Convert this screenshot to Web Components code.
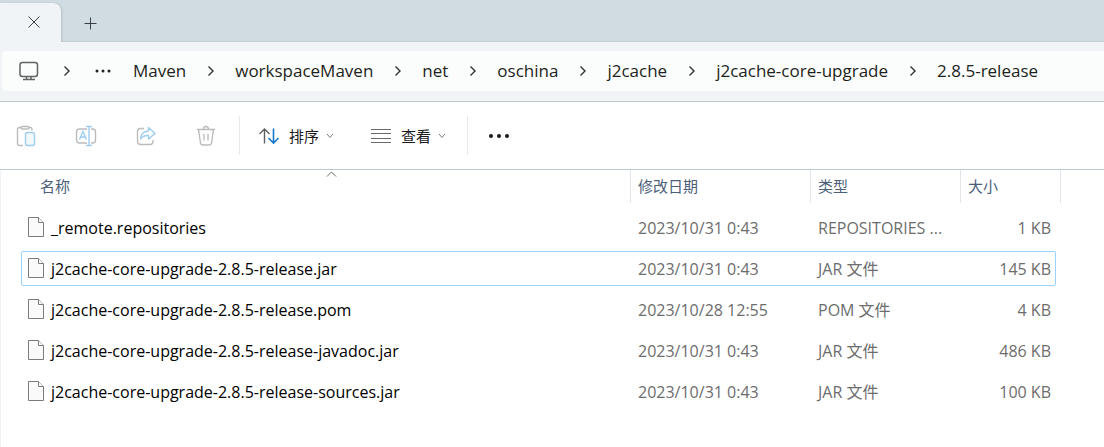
<!DOCTYPE html>
<html lang="zh-CN">
<head>
<meta charset="utf-8">
<title>2.8.5-release</title>
<style>
  body { margin: 0; background: #fff; font-family: "Open Sans", "Noto Sans CJK SC", sans-serif; }
</style>
</head>
<body>
<file-explorer></file-explorer>

<template id="file-explorer">
  <style>
    :host { display: flex; flex-direction: column; min-height: 100vh; background: #fff; color: #1b1b1b; }
    file-list { flex: 1; }
  </style>
  <tab-strip></tab-strip>
  <address-bar>
    <path-crumb>Maven</path-crumb>
    <path-crumb>workspaceMaven</path-crumb>
    <path-crumb>net</path-crumb>
    <path-crumb>oschina</path-crumb>
    <path-crumb>j2cache</path-crumb>
    <path-crumb>j2cache-core-upgrade</path-crumb>
    <path-crumb last>2.8.5-release</path-crumb>
  </address-bar>
  <command-bar></command-bar>
  <file-list></file-list>
</template>

<template id="tab-strip">
  <style>
    :host { display: flex; height: 42px; box-sizing: border-box; background: #d0dce1; border-bottom: 1px solid #c3cfd3; }
    .tab { box-sizing: border-box; width: 61px; margin: 3px 0 -1px; padding: 6px 14px 0 0; display: flex; justify-content: flex-end; align-items: flex-start; background: #f0f4f6; border-radius: 0 8px 0 0; box-shadow: 1px 0 2px #b4c2c7; clip-path: inset(-3px -4px 0 0); }
    button { border: 0; background: none; padding: 0; width: 26px; height: 26px; display: grid; place-items: center; }
    .new { margin: 10px 0 0 16px; }
    svg { fill: none; stroke: #3b3f41; }
  </style>
  <div class="tab"><button aria-label="关闭标签页"><svg width="12" height="12"><path d="M.5.5l11 11M11.5.5l-11 11"/></svg></button></div>
  <button class="new" aria-label="新建标签页"><svg width="13" height="13"><path d="M6.5.5v12M.5 6.5h12"/></svg></button>
</template>

<template id="address-bar">
  <style>
    :host { display: block; background: #f0f4f6; padding: 9px 0 10px 2px; border-bottom: 1px solid #c0cacd; }
    nav { display: flex; align-items: center; height: 40px; padding-left: 16px; background: #fbfdfd; border-radius: 4px 0 0 4px; }
    button { border: 0; background: none; padding: 0; display: flex; }
    svg { fill: none; stroke: #303030; }
    .pc { padding: 0 24px 0 0; }
    .chev { stroke-width: 1.4; }
    .more { padding: 0 22px 0 24px; }
    .more svg { fill: #222; stroke: none; }
  </style>
  <nav aria-label="路径">
    <button class="pc" aria-label="此电脑"><svg width="21" height="20" stroke-width="1.5" style="stroke:#606364"><rect x="2" y="1.5" width="17.5" height="14" rx="2.5"/><path d="M8.500 15.5v3M13 15.5v3M5 18.5h12"/></svg></button>
    <svg class="chev" width="8" height="12"><path d="M1.5 1.5L6 6l-4.5 4.5"/></svg>
    <button class="more" aria-label="更多"><svg width="16" height="6"><circle cx="2" cy="3" r="1.5"/><circle cx="8" cy="3" r="1.5"/><circle cx="14" cy="3" r="1.5"/></svg></button>
    <slot></slot>
  </nav>
</template>

<template id="path-crumb">
  <style>
    :host { display: flex; align-items: center; white-space: nowrap; }
    a { color: #1d1f20; text-decoration: none; font-size: 17px; line-height: 24px; }
    svg { margin: 0 20px 0 21px; fill: none; stroke: #303030; stroke-width: 1.4; }
    :host([last]) svg { display: none; }
  </style>
  <a href="#"><slot></slot></a>
  <svg width="8" height="12"><path d="M1.5 1.5L6 6l-4.5 4.5"/></svg>
</template>

<template id="command-bar">
  <style>
    :host { display: flex; align-items: center; height: 67px; background: #fff; border-bottom: 1px solid #bfc8cc; }
    .edit { display: flex; gap: 36px; padding: 0 21px 0 14px; }
    .views { display: flex; gap: 36px; padding: 0 21px 0 18px; }
    .edit, .views { height: 39px; align-items: center; border-right: 1px solid #e6e9ea; }
    button { border: 0; background: none; padding: 0; display: flex; align-items: center; }
    .dots { margin-left: 20px; }
    .dots svg { fill: #1b1b1b; }
    svg { display: block; fill: none; }
    .g { stroke: #bcbcbc; }
    .b { stroke: #9fcdf0; }
  </style>
  <div class="edit">
    <button disabled aria-label="粘贴"><svg width="24" height="24" stroke-width="1.4"><path class="g" d="M9 21.5H5.500Q3.500 21.5 3.500 19.5V5.500Q3.500 3.500 5.500 3.500H7M15 3.500h1.5q1.5 0 1.5 2V6.500"/><rect class="g" x="7" y="2.5" width="8" height="2.5" rx="1.2"/><rect class="b" x="11.5" y="8.5" width="9" height="13" rx="2" fill="#f3f8fc"/></svg></button>
    <button disabled aria-label="重命名"><svg width="24" height="24" stroke-width="1.4"><path class="g" d="M13 19H5.500Q2.500 19 2.500 16V8Q2.500 5 5.500 5H13M17 5h1.5q3 0 3 3v8q0 3-3 3H17"/><path class="b" d="M5.500 15.5L9 7.500l3.500 8M6.500 13h5M15 2.500v19M12 2.500h6M12 21.5h6"/></svg></button>
    <button disabled aria-label="共享"><svg width="24" height="24" stroke-width="1.4"><path class="g" d="M10 4.500H6.500Q3.500 4.500 3.500 7.500V17q0 3.500 3.500 3.500h9q3 0 3-3V16"/><path class="b" stroke-linejoin="round" d="M14.500 3.500L21 9.500l-6.500 5.500v-3.500q-5-.5-8 3.500Q7 7.500 14.500 7z"/></svg></button>
    <button disabled aria-label="删除"><svg width="24" height="24" stroke-width="1.4"><path class="g" d="M3 5.500h18M9.500 5.500q0-3 2.500-3t2.500 3M4.500 5.500L6.500 19q.3 2 2.500 2h6q2.200 0 2.500-2L19.500 5.500M10 10v6.500M14 10v6.500"/></svg></button>
  </div>
  <div class="views">
    <command-menu label="排序"><svg width="22" height="20" stroke-width="1.4" fill="none"><path stroke="#5c5f61" d="M6.500 17.5V3M1.500 8l5-5 5 5"/><path stroke="#1879cf" stroke-width="1.6" d="M15.500 2.500V17M10.500 12l5 5 5-5"/></svg></command-menu>
    <command-menu label="查看"><svg width="22" height="20" stroke="#696969"><path d="M1 3.500h20M1 7.500h20M1 12.500h20M1 16.500h20"/></svg></command-menu>
  </div>
  <button class="dots" aria-label="查看更多"><svg width="22" height="8"><circle cx="3" cy="4" r="2"/><circle cx="11" cy="4" r="2"/><circle cx="19" cy="4" r="2"/></svg></button>
</template>

<template id="command-menu">
  <style>
    :host { display: block; }
    button { border: 0; background: none; padding: 0; display: flex; align-items: center; color: #1b1b1b; font-family: inherit; font-size: 15px; line-height: 24px; }
    span { margin: 0 7px 0 9px; }
  </style>
  <button><slot></slot><span></span><svg width="8" height="6" fill="none" stroke="#7d7d7d"><path d="M1 1l3 3.500L7 1"/></svg></button>
</template>

<template id="file-list">
  <style>
    :host { display: block; box-sizing: border-box; padding: 0 43px 0 20px; border-left: 1px solid #f0f2f3; background: #fff; }
    table { width: 100%; table-layout: fixed; border-spacing: 0; font-size: 16px; line-height: 24px; color: #6d6d6d; }
    .date { width: 180px; } .type { width: 150px; } .size { width: 100px; }
    th, td { padding: 0; text-align: left; font-weight: 400; white-space: nowrap; }
    th { height: 37px; vertical-align: top; font-size: 15px; color: #4c607a; }
    th div { position: relative; box-sizing: border-box; height: 33px; padding: 4px 0 0 7px; border-right: 1px solid #e3e5e6; }
    th:first-child div { padding-left: 19px; }
    th svg { position: absolute; left: 50%; top: 1px; fill: none; stroke: #6a6a6a; }
    tr { position: relative; }
    td { height: 41px; padding-left: 7px; }
    td:first-child { padding-left: 0; }
    .name { display: flex; align-items: center; gap: 7px; padding-left: 7px; color: #000; }
    .name svg { flex: none; margin-bottom: 2px; }
    td:last-child { text-align: right; padding-right: 10px; }
    tr.focused td:last-child::after { content: ""; position: absolute; inset: 3px 5px 3px 0; border: 1px solid #99d1ff; border-radius: 2px; pointer-events: none; }
  </style>
  <table>
    <colgroup><col><col class="date"><col class="type"><col class="size"></colgroup>
    <thead><tr>
      <th aria-sort="ascending"><div>名称<svg width="11" height="6"><path d="M1 5.500L5.500 1 10 5.500"/></svg></div></th>
      <th><div>修改日期</div></th><th><div>类型</div></th><th><div>大小</div></th>
    </tr></thead>
    <tbody></tbody>
  </table>
</template>

<script>
  const define = (name, setup) => customElements.define(name, class extends HTMLElement {
    constructor() {
      super();
      this.attachShadow({ mode: 'open' }).append(document.getElementById(name).content.cloneNode(true));
    }
    connectedCallback() { if (setup) setup(this, this.shadowRoot); }
  });

  const files = [
    ['_remote.repositories', '2023/10/31 0:43', 'REPOSITORIES ...', '1 KB'],
    ['j2cache-core-upgrade-2.8.5-release.jar', '2023/10/31 0:43', 'JAR 文件', '145 KB', true],
    ['j2cache-core-upgrade-2.8.5-release.pom', '2023/10/28 12:55', 'POM 文件', '4 KB'],
    ['j2cache-core-upgrade-2.8.5-release-javadoc.jar', '2023/10/31 0:43', 'JAR 文件', '486 KB'],
    ['j2cache-core-upgrade-2.8.5-release-sources.jar', '2023/10/31 0:43', 'JAR 文件', '100 KB']
  ];
  const page = '<svg width="16" height="20" fill="#fafafa" stroke="#7b7b7b"><path d="M.5.5h10l5 5v14H.5z"/><path d="M10.5.5v5h5"/></svg>';

  define('path-crumb');
  define('command-menu', (el, root) => { root.querySelector('span').textContent = el.getAttribute('label'); });
  define('tab-strip');
  define('address-bar');
  define('command-bar');
  define('file-list', (el, root) => {
    root.querySelector('tbody').innerHTML = files.map(([name, date, type, size, focused]) =>
      `<tr${focused ? ' class="focused"' : ''}><td><div class="name">${page}<span>${name}</span></div></td><td>${date}</td><td>${type}</td><td>${size}</td></tr>`).join('');
  });
  define('file-explorer');
</script>
</body>
</html>
